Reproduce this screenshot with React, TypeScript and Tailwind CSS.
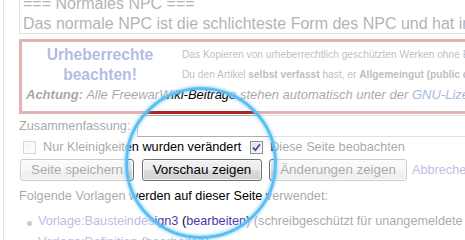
import React from "react";

function Checkbox({ checked }: { checked?: boolean }) {
  return (
    <span className="inline-flex h-[13px] w-[13px] shrink-0 items-center justify-center border border-[#8e8f8f] bg-[linear-gradient(135deg,#dcdcdc,#fbfbfb)] shadow-[inset_0_0_0_1px_#f4f4f4]">
      {checked && (
        <svg width="9" height="9" viewBox="0 0 9 9">
          <path d="M1 4.6 L3.4 7.2 L8 1.3" stroke="#3b46a6" strokeWidth="1.7" fill="none" />
        </svg>
      )}
    </span>
  );
}

function Btn({ children, w }: { children: React.ReactNode; w: string }) {
  return (
    <span
      className={`${w} inline-flex h-[22px] shrink-0 items-center justify-center rounded-[3px] border border-[#707070] bg-[linear-gradient(#f2f2f2_0%,#ebebeb_50%,#dddddd_51%,#cfcfcf_100%)] text-[13.33px] leading-[20px] text-black shadow-[inset_0_0_0_1px_rgba(255,255,255,0.7)]`}
    >
      {children}
    </span>
  );
}

export default function App() {
  return (
    <div className="relative h-[240px] w-[465px] overflow-hidden bg-white font-['Liberation_Sans',Arial,sans-serif] text-[12.7px] text-black">
      <div className="ml-[3px] w-[720px] border-l border-[#aaaaaa] pl-[15px]">
        {/* textarea */}
        <div className="-mt-[6px] h-[40px] overflow-hidden whitespace-nowrap border-b border-l border-[#abadb3] pl-[3px] text-[16px] leading-[20px] text-[#222]">
          <div>=== Normales NPC ===</div>
          <div>Das normale NPC ist die schlichteste Form des NPC und hat im Spiel keine besondere Funktion.</div>
        </div>

        {/* copyright box */}
        <div className="mt-[5px] border-[3px] border-[#b22222] pb-[6.5px] pt-[2.5px]">
          <div className="flex">
            <div className="w-[156px] shrink-0 text-center text-[15.6px] font-bold leading-[20px] text-[#1a3fb0]">
              Urheberrechte
              <br />
              beachten!
            </div>
            <div className="ml-[4px] whitespace-nowrap text-[10.2px] leading-[20px] text-[#444]">
              <div>Das Kopieren von urheberrechtlich geschützten Werken ohne Erlaubnis des Urhebers ist verboten.</div>
              <div>
                Du den Artikel <b>selbst verfasst</b> hast, er <b>Allgemeingut (public domain)</b> ist oder der Urheber zugestimmt hat.
              </div>
            </div>
          </div>
          <div className="whitespace-nowrap pl-[4px] text-[13px] italic leading-[20px]">
            <b>Achtung:</b> Alle FreewarWiki-Beiträge stehen automatisch unter der{" "}
            <span className="text-[#002bb8]">GNU-Lizenz für freie Dokumentation</span>.
          </div>
        </div>

        {/* summary */}
        <div className="mt-[1px] flex h-[22px] items-center">
          <span className="w-[118px] shrink-0 leading-[15px]">Zusammenfassung:</span>
          <div className="h-[22px] flex-1 border border-[#abadb3] border-l-[#c8ccd4] bg-white" />
        </div>

        {/* checkboxes */}
        <div className="flex h-[20px] items-center whitespace-nowrap leading-[15px]">
          <span className="ml-[4px]" />
          <Checkbox />
          <span className="ml-[7px]">Nur Kleinigkeiten wurden verändert</span>
          <span className="ml-[9px]" />
          <Checkbox checked />
          <span className="ml-[7px]">Diese Seite beobachten</span>
        </div>

        {/* buttons */}
        <div className="mt-[2px] flex items-center whitespace-nowrap">
          <span className="ml-[1px]" />
          <Btn w="w-[114px]">Seite speichern</Btn>
          <span className="ml-[8px]" />
          <Btn w="w-[120px]">Vorschau zeigen</Btn>
          <span className="ml-[7px]" />
          <Btn w="w-[138px]">Änderungen zeigen</Btn>
          <span className="ml-[5px] leading-[15px] text-[#4a3aa8]">Abbrechen</span>
          <span className="ml-[4px] leading-[15px]">| Bearbeitungshilfe</span>
        </div>

        {/* templates */}
        <p className="mt-[6px] whitespace-nowrap leading-[19px]">Folgende Vorlagen werden auf dieser Seite verwendet:</p>
        <ul className="mt-[6.35px]">
          <li className="mb-[1.27px] flex items-start whitespace-nowrap leading-[19px]">
            <span className="ml-[8px] mt-[9px] h-[5px] w-[5px] shrink-0 rounded-full bg-[#4a6aa0]" />
            <span className="ml-[6px]">
              <span className="text-[#4a3aa8]">Vorlage:Bausteindesign3</span> (<span className="text-[#4a3aa8]">bearbeiten</span>) (schreibgeschützt für unangemeldete Benutzer)
            </span>
          </li>
          <li className="mb-[1.27px] flex items-start whitespace-nowrap leading-[19px]">
            <span className="ml-[8px] mt-[9px] h-[5px] w-[5px] shrink-0 rounded-full bg-[#4a6aa0]" />
            <span className="ml-[6px]">
              <span className="text-[#4a3aa8]">Vorlage:Definition</span> (<span className="text-[#4a3aa8]">bearbeiten</span>)
            </span>
          </li>
        </ul>
      </div>

      {/* fade overlay with circular hole */}
      <div className="pointer-events-none absolute inset-0 bg-[radial-gradient(circle_at_201px_163px,transparent_73px,rgba(255,255,255,0.65)_74.5px)]" />
      {/* highlight ring */}
      <div className="pointer-events-none absolute left-[125px] top-[87px] h-[152px] w-[152px] rounded-full border-[3px] border-[#5cbff3] shadow-[0_0_3px_1px_rgba(92,191,243,0.55),inset_0_0_3px_1px_rgba(92,191,243,0.55)] blur-[0.4px]" />
    </div>
  );
}
